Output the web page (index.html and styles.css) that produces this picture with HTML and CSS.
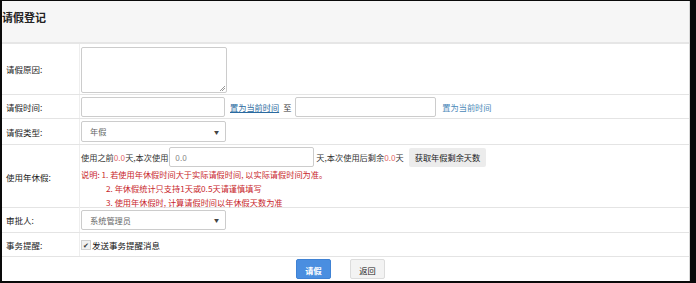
FILE: index.html
```html
<!DOCTYPE html>
<html lang="zh">
<head>
<meta charset="utf-8">
<link rel="stylesheet" href="styles.css">
</head>
<body>
<div class="panel">
  <div class="head">请假登记</div>
  <div class="row r1">
    <div class="lab">请假原因:</div>
    <div class="val"><div class="ta"><span class="grip"></span></div></div>
  </div>
  <div class="row r2">
    <div class="lab">请假时间:</div>
    <div class="val line">
      <div class="inp w1"></div>
      <a class="lnk u">置为当前时间</a>
      <span class="to">至</span>
      <div class="inp w2"></div>
      <a class="lnk">置为当前时间</a>
    </div>
  </div>
  <div class="row r3">
    <div class="lab">请假类型:</div>
    <div class="val"><div class="sel">年假<span class="arr">▼</span></div></div>
  </div>
  <div class="row r4">
    <div class="lab">使用年休假:</div>
    <div class="val col">
      <div class="line l1">
        <span>使用之前<em class="num">0.0</em>天,本次使用</span>
        <div class="inp w3">0.0</div>
        <span>天,本次使用后剩余<em class="num">0.0</em>天</span>
        <span class="gbtn">获取年假剩余天数</span>
      </div>
      <div class="note">说明: 1. 若使用年休假时间大于实际请假时间, 以实际请假时间为准。</div>
      <div class="note ind">2. 年休假统计只支持1天或0.5天请谨慎填写</div>
      <div class="note ind">3. 使用年休假时, 计算请假时间以年休假天数为准</div>
    </div>
  </div>
  <div class="row r5">
    <div class="lab">审批人:</div>
    <div class="val"><div class="sel s2">系统管理员<span class="arr">▼</span></div></div>
  </div>
  <div class="row r6">
    <div class="lab">事务提醒:</div>
    <div class="val line"><span class="chk">✔</span><span class="chkt">发送事务提醒消息</span></div>
  </div>
  <div class="foot">
    <span class="btn primary">请假</span>
    <span class="btn">返回</span>
  </div>
</div>
</body>
</html>
```
FILE: styles.css
```css
html, body {
  margin: 0;
  padding: 0;
  background: #0a0a0a;
  width: 696px;
  height: 283px;
  overflow: hidden;
}
body {
  font-family: "Noto Sans CJK SC", "Noto Sans", sans-serif;
  font-size: 8.2px;
  color: #333;
}
.panel {
  margin: 1px 0 0 2px;
  width: 688px;
  height: 280px;
  background: #fff;
  border-right: 1px solid #d8d8d8;
  box-sizing: border-box;
}
.head {
  height: 43px;
  box-sizing: border-box;
  background: #f6f6f6;
  border-bottom: 2px solid #e6e6e6;
  font-size: 11px;
  font-weight: bold;
  color: #222;
  line-height: 33px;
  padding-left: 0;
}
.row {
  display: grid;
  grid-template-columns: 78px 1fr;
  border-bottom: 1px solid #e4e4e4;
  box-sizing: border-box;
}
.lab {
  display: flex;
  align-items: center;
  padding-left: 4px;
  color: #222;
  font-size: 8.5px;
  border-right: 1px solid #eeeeee;
}
.val {
  padding-left: 1px;
  display: flex;
  align-items: center;
}
.r1 { height: 51px; }
.r2 { height: 24px; }
.r3 { height: 26px; }
.r4 { height: 63px; }
.r5 { height: 25px; }
.r6 { height: 24px; }
.line { display: flex; align-items: center; }
.ta {
  position: relative;
  width: 146px;
  height: 46px;
  box-sizing: border-box;
  border: 1px solid #ccc;
  border-radius: 2px;
  margin-top: 1px;
}
.grip {
  position: absolute;
  right: 1px;
  bottom: 1px;
  width: 5px;
  height: 5px;
  background: linear-gradient(135deg, transparent 45%, #999 45%, #999 55%, transparent 55%, transparent 70%, #999 70%, #999 80%, transparent 80%);
}
.inp {
  height: 20px;
  box-sizing: border-box;
  border: 1px solid #ccc;
  border-radius: 2px;
  background: #fff;
  color: #888;
  line-height: 18px;
  padding-left: 5px;
}
.w1 { width: 144px; }
.w2 { width: 141px; }
.w3 { width: 145px; margin: 0 2px 0 1px; }
.lnk {
  color: #2a6aa0;
  margin-left: 5px;
  cursor: pointer;
}
.lnk.u { text-decoration: underline; }
.r2 .lnk:last-child { margin-left: 6px; color: #4a88b8; }
.to { margin: 0 4px 0 4px; }
.sel {
  position: relative;
  width: 145px;
  height: 21px;
  box-sizing: border-box;
  border: 1px solid #ccc;
  border-radius: 2px;
  padding-left: 8px;
  line-height: 19px;
  color: #666;
}
.s2 { height: 20px; line-height: 18px; }
.arr {
  position: absolute;
  right: 6px;
  top: 0;
  font-size: 5px;
  color: #444;
}
.col {
  flex-direction: column;
  align-items: flex-start;
  justify-content: flex-start;
  padding-top: 2px;
}
.l1 { height: 20px; }
em.num { font-style: normal; color: #e26a6a; }
.gbtn {
  margin-left: 5px;
  height: 19px;
  line-height: 19px;
  padding: 0 6px;
  background: #ececec;
  border-radius: 2px;
  color: #222;
}
.note {
  color: #c8262c;
  height: 14px;
  line-height: 14px;
}
.ind { padding-left: 25px; }
.chk {
  display: inline-block;
  width: 8px;
  height: 8px;
  font-size: 7px;
  line-height: 8px;
  text-align: center;
  color: #333;
  background: #f0f0f0;
  border: 1px solid #d0d0d0;
  margin-right: 1px;
}
.chkt { color: #111; font-size: 8.5px; }
.foot {
  display: flex;
  align-items: center;
  height: 24px;
  padding-left: 294px;
  gap: 19px;
}
.btn {
  display: inline-block;
  width: 35px;
  height: 20px;
  line-height: 20px;
  text-align: center;
  box-sizing: border-box;
  background: #f3f3f3;
  border: 1px solid #dcdcdc;
  border-radius: 2px;
  color: #222;
}
.btn.primary {
  background: #4a8ee0;
  border-color: #3f82d4;
  color: #fff;
  font-weight: bold;
}
```
